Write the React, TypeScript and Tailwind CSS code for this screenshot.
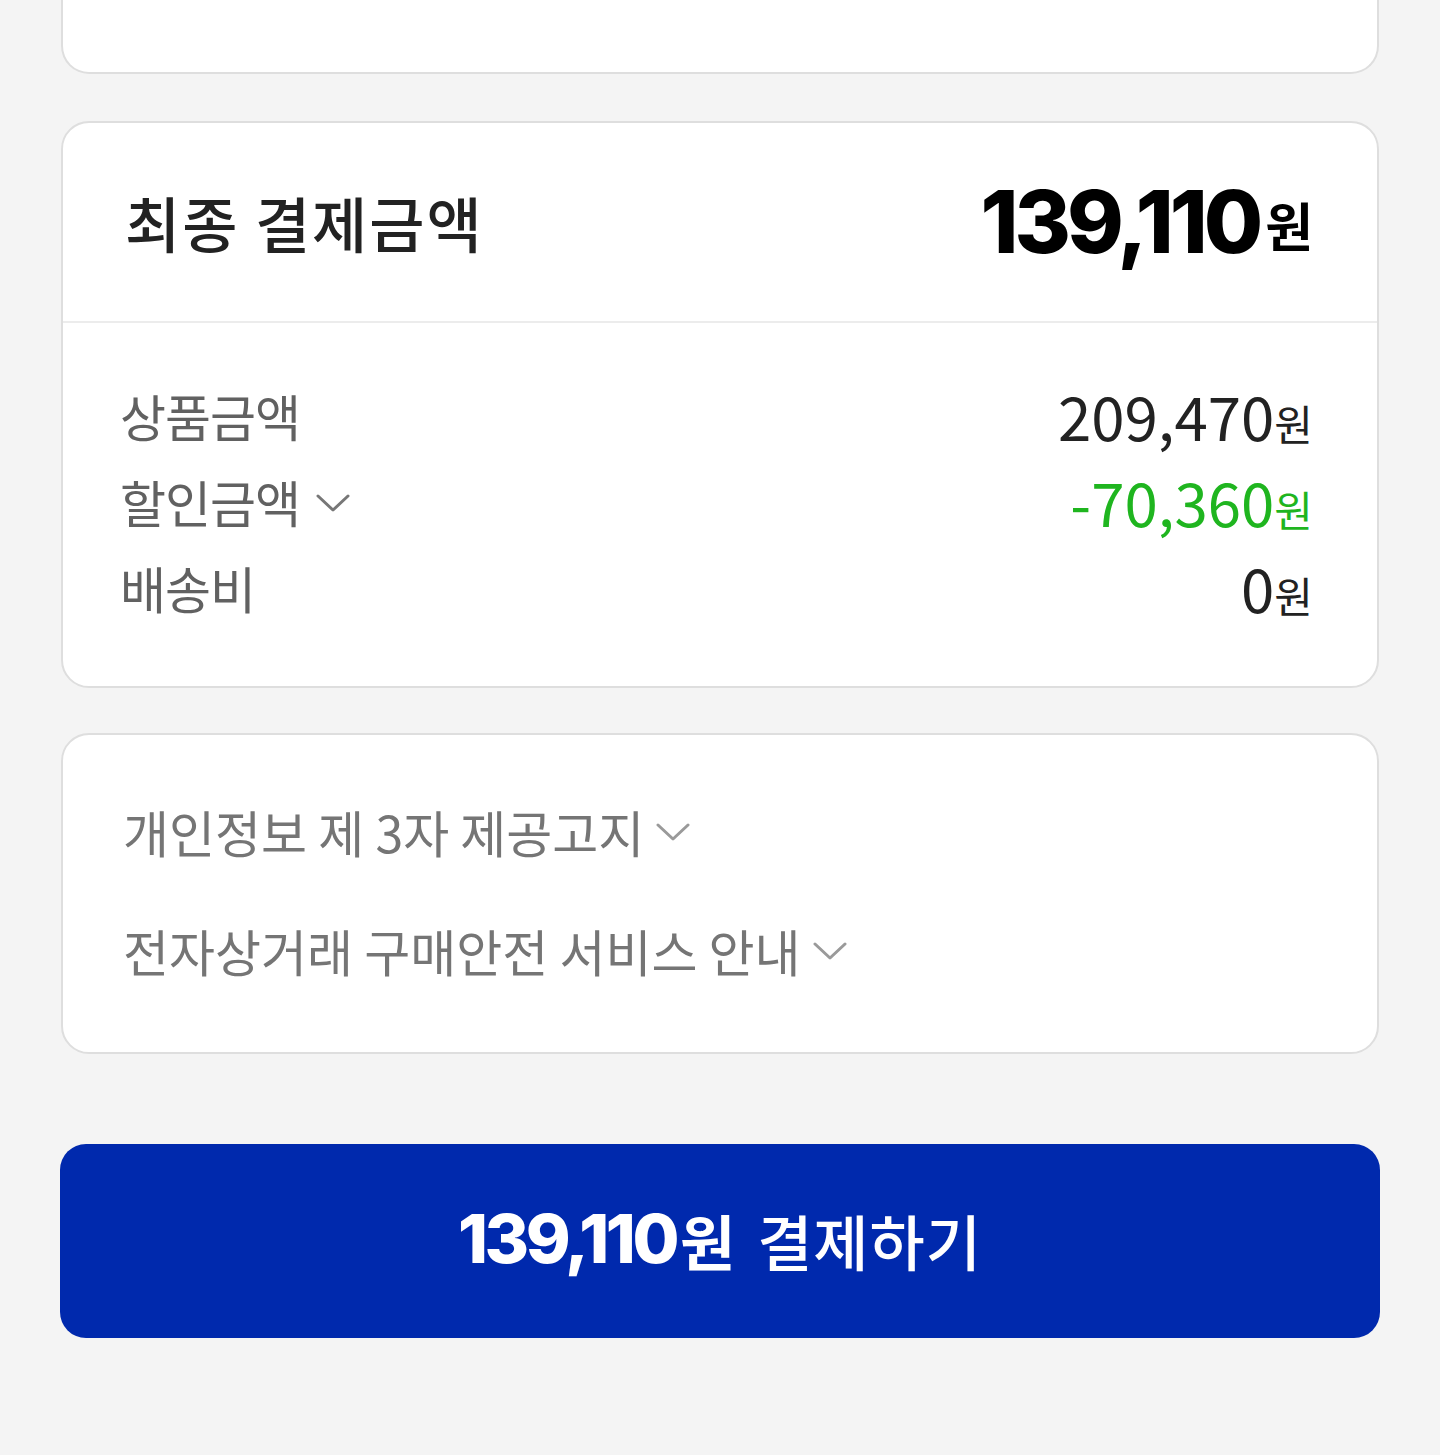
import React from "react";

const KR = "font-['Noto_Sans_CJK_KR',sans-serif]";
const NUM = "font-['Inter','Noto_Sans_CJK_KR',sans-serif]";

function Chevron({ className }: { className?: string }) {
  return (
    <svg viewBox="0 0 34 20" className={className} fill="none">
      <path d="M2 3 L17 17 L32 3" stroke="currentColor" strokeWidth="3" strokeLinecap="round" strokeLinejoin="round" />
    </svg>
  );
}

export default function App() {
  return (
    <div className={`min-h-[1455px] w-[1440px] bg-[#f4f4f4] ${KR}`}>
      <div className="flex flex-col px-[61px]">
        {/* top card (cut off) */}
        <div className="h-[74px] rounded-b-[28px] border-2 border-t-0 border-[#dedede] bg-white" />

        {/* final amount card */}
        <div className="mt-[47px] flex flex-col rounded-[28px] border-2 border-[#dedede] bg-white">
          <div className="flex h-[200px] items-center justify-between border-b-2 border-[#ececec] pl-[62px] pr-[64px]">
            <span className="text-[60px] font-medium leading-none tracking-[2px] text-[#222]">최종 결제금액</span>
            <span className="flex items-center text-black">
              <span className={`${NUM} text-[86px] font-extrabold leading-none tracking-[-4px]`}>139,110</span>
              <span className="ml-[6px] mt-[6px] text-[52px] font-bold leading-none">원</span>
            </span>
          </div>
          <div className="flex flex-col pb-[56px] pl-[57px] pr-[64px] pt-[49px]">
            <div className="flex h-[86px] items-center justify-between">
              <span className="text-[50px] leading-none tracking-[-1px] text-[#616161]">상품금액</span>
              <span className="flex items-baseline text-[#222]">
                <span className="text-[60px] leading-none">209,470</span>
                <span className="text-[42px] leading-none">원</span>
              </span>
            </div>
            <div className="flex h-[86px] items-center justify-between">
              <span className="flex items-center">
                <span className="text-[50px] leading-none tracking-[-1px] text-[#616161]">할인금액</span>
                <Chevron className="ml-[16px] mt-[4px] h-[20px] w-[34px] text-[#777]" />
              </span>
              <span className="flex items-baseline text-[#1fb51f]">
                <span className="text-[60px] leading-none">-70,360</span>
                <span className="text-[42px] leading-none">원</span>
              </span>
            </div>
            <div className="flex h-[86px] items-center justify-between">
              <span className="text-[50px] leading-none tracking-[-1px] text-[#616161]">배송비</span>
              <span className="flex items-baseline text-[#222]">
                <span className="text-[60px] leading-none">0</span>
                <span className="text-[42px] leading-none">원</span>
              </span>
            </div>
          </div>
        </div>

        {/* notices card */}
        <div className="mt-[45px] flex flex-col gap-[59px] rounded-[28px] border-2 border-[#dedede] bg-white pb-[72px] pl-[60px] pt-[66px]">
          <div className="flex h-[60px] items-center">
            <span className="text-[50px] leading-none text-[#757575]">개인정보 제 3자 제공고지</span>
            <Chevron className="ml-[12px] mt-[2px] h-[20px] w-[34px] text-[#9a9a9a]" />
          </div>
          <div className="flex h-[60px] items-center">
            <span className="text-[50px] leading-none text-[#757575]">전자상거래 구매안전 서비스 안내</span>
            <Chevron className="ml-[12px] mt-[2px] h-[20px] w-[34px] text-[#9a9a9a]" />
          </div>
        </div>

        {/* pay button */}
        <button className="-mx-px mt-[90px] flex h-[194px] items-center justify-center rounded-[26px] bg-[#0029ad] pb-[6px] text-white">
          <span className="flex items-center">
            <span className={`${NUM} text-[68px] font-extrabold leading-none tracking-[-3.5px]`}>139,110</span>
            <span className="ml-[4px] mt-[4px] text-[60px] font-bold leading-none">원</span>
            <span className="ml-[22px] mt-[4px] text-[60px] font-medium leading-none tracking-[1px]">결제하기</span>
          </span>
        </button>
      </div>
    </div>
  );
}
